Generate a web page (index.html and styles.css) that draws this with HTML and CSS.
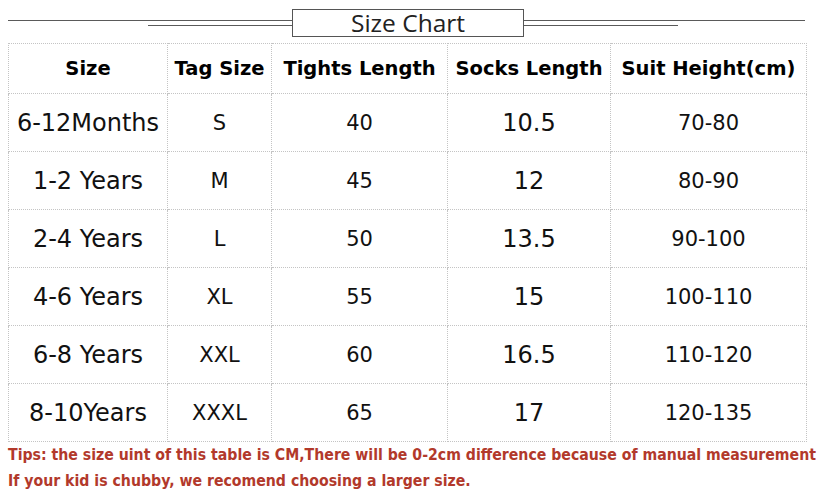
FILE: index.html
```html
<!DOCTYPE html>
<html>
<head>
<meta charset="utf-8">
<link rel="stylesheet" href="styles.css">
</head>
<body>
<div class="page">
  <div class="title-bar">
    <div class="rules rules-left">
      <div class="rule-long"></div>
      <div class="rule-short"></div>
    </div>
    <div class="title-box">Size Chart</div>
    <div class="rules rules-right">
      <div class="rule-long"></div>
      <div class="rule-short"></div>
    </div>
  </div>
  <table class="chart">
    <colgroup>
      <col class="c1"><col class="c2"><col class="c3"><col class="c4"><col class="c5">
    </colgroup>
    <thead>
      <tr class="head-row">
        <th>Size</th><th>Tag Size</th><th>Tights Length</th><th>Socks Length</th><th>Suit Height(cm)</th>
      </tr>
    </thead>
    <tbody>
      <tr><td class="age">6-12Months</td><td class="tag">S</td><td class="num">40</td><td class="sock">10.5</td><td class="ht">70-80</td></tr>
      <tr><td class="age">1-2 Years</td><td class="tag">M</td><td class="num">45</td><td class="sock">12</td><td class="ht">80-90</td></tr>
      <tr><td class="age">2-4 Years</td><td class="tag">L</td><td class="num">50</td><td class="sock">13.5</td><td class="ht">90-100</td></tr>
      <tr><td class="age">4-6 Years</td><td class="tag">XL</td><td class="num">55</td><td class="sock">15</td><td class="ht">100-110</td></tr>
      <tr><td class="age">6-8 Years</td><td class="tag">XXL</td><td class="num">60</td><td class="sock">16.5</td><td class="ht">110-120</td></tr>
      <tr><td class="age">8-10Years</td><td class="tag">XXXL</td><td class="num">65</td><td class="sock">17</td><td class="ht">120-135</td></tr>
    </tbody>
  </table>
  <div class="tips">
    <p>Tips: the size uint of this table is CM,There will be 0-2cm difference because of manual measurement</p>
    <p>If your kid is chubby, we recomend choosing a larger size.</p>
  </div>
</div>
</body>
</html>
```

FILE: styles.css
```css
html, body {
  margin: 0;
  padding: 0;
  background: #ffffff;
}
.page {
  width: 819px;
  height: 498px;
  overflow: hidden;
}
.title-bar {
  display: flex;
  align-items: center;
  padding: 9px 14px 0 8px;
  height: 28px;
  margin-bottom: 6px;
}
.rules {
  display: flex;
  flex-direction: column;
  flex: 1;
}
.rules-left { width: 284px; flex: none; }
.rules-right { flex: 1; }
.rule-long {
  border-top: 1px solid #5a5a5a;
}
.rule-short {
  border-top: 1px solid #5a5a5a;
  margin-top: 4px;
}
.rules-left .rule-short { margin-left: 140px; }
.rules-right .rule-short { width: 154px; }
.title-box {
  width: 230px;
  height: 26px;
  border: 1px solid #555;
  display: flex;
  align-items: center;
  justify-content: center;
  font-family: "Open Sans", "Liberation Sans", sans-serif;
  font-size: 24.5px;
  color: #222;
  line-height: 1;
}
.chart {
  margin-left: 8px;
  border-collapse: collapse;
  width: 798px;
  table-layout: fixed;
  font-family: "DejaVu Sans", Verdana, sans-serif;
  color: #111;
}
.c1 { width: 159px; }
.c2 { width: 104px; }
.c3 { width: 176px; }
.c4 { width: 163px; }
.c5 { width: 196px; }
.chart th, .chart td {
  border: 1px dotted #c4c4c4;
  text-align: center;
  padding: 0;
  white-space: nowrap;
}
.head-row { height: 50px; }
.chart th {
  font-weight: bold;
  font-size: 19.5px;
  color: #000;
}
.chart tbody tr { height: 58px; }
.age { font-size: 24px; }
.tag { font-size: 21px; }
.num { font-size: 21px; }
.sock { font-size: 24px; }
.ht { font-size: 21px; }
.tips {
  padding: 0 0 0 8px;
  font-family: "DejaVu Sans Condensed", "DejaVu Sans", sans-serif;
  font-weight: bold;
  font-size: 15.7px;
  color: #b2392b;
  line-height: 26px;
}
.tips p {
  margin: 0;
  white-space: nowrap;
}
```
